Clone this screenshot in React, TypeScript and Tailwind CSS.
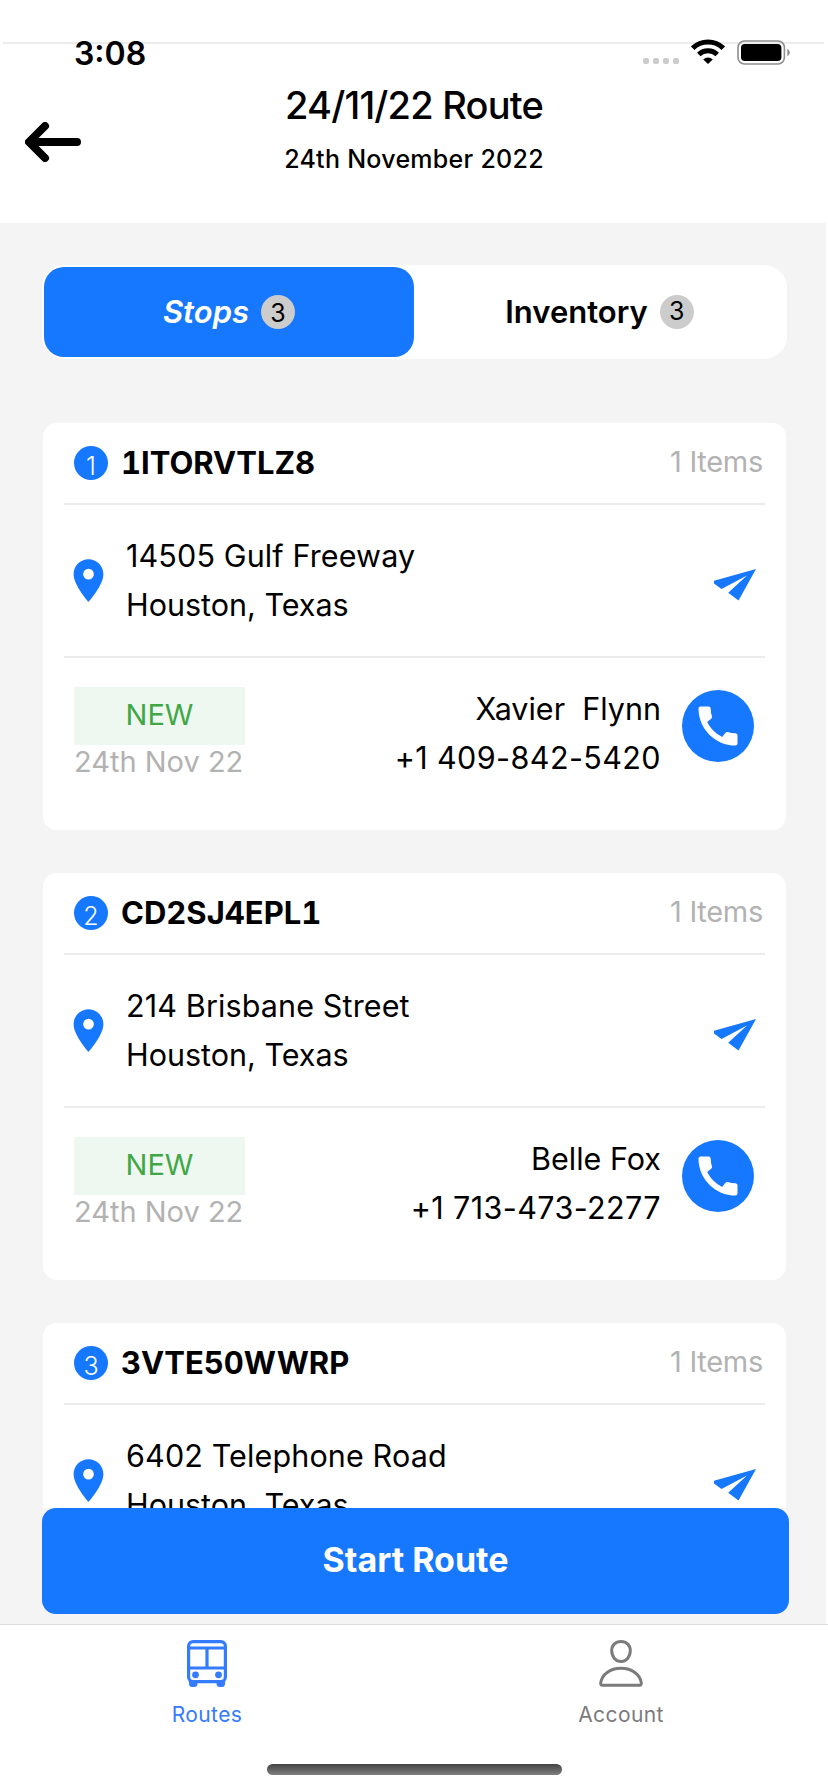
import React, { useState } from 'react';
import { MdCall, MdLocationOn } from 'react-icons/md';

const BLUE = '#1677ff';

interface Stop {
    id: string;
    items: number;
    street: string;
    city: string;
    delivery?: {
        status: string;
        date: string;
        contact: string;
        phone: string;
    };
}

const stops: Stop[] = [
    {
        id: '1ITORVTLZ8', items: 1, street: '14505 Gulf Freeway', city: 'Houston, Texas',
        delivery: { status: 'NEW', date: '24th Nov 22', contact: 'Xavier  Flynn', phone: '+1 409-842-5420' },
    },
    {
        id: 'CD2SJ4EPL1', items: 1, street: '214 Brisbane Street', city: 'Houston, Texas',
        delivery: { status: 'NEW', date: '24th Nov 22', contact: 'Belle Fox', phone: '+1 713-473-2277' },
    },
    { id: '3VTE50WWRP', items: 1, street: '6402 Telephone Road', city: 'Houston, Texas' },
];

// --- Icons ---
const BackArrow = () => (
    <svg width="56" height="40" viewBox="0 0 56 40" fill="none" stroke="black" strokeWidth="8" strokeLinecap="round" strokeLinejoin="round">
        <path d="M52 20H5M20 4L4 20L20 36" />
        <path d="M12 16L8 20L12 24Z" fill="black" strokeWidth="2" />
    </svg>
);

const WifiIcon = () => (
    <svg width="34" height="25" viewBox="0 0 34 25" fill="none" stroke="black" strokeWidth="5">
        <path d="M1.7 9.2A22 22 0 0 1 32.3 9.2" />
        <path d="M7.8 15.5A13.2 13.2 0 0 1 26.2 15.5" />
        <path d="M17 25L12.2 20.4A7 7 0 0 1 21.8 20.4Z" fill="black" stroke="none" />
    </svg>
);

const BatteryIcon = () => (
    <svg width="54" height="25" viewBox="0 0 54 25">
        <rect x="1" y="1" width="46.4" height="23" rx="6.5" fill="none" stroke="#8e8e8e" strokeWidth="1.6" />
        <rect x="4" y="4" width="40.4" height="17" rx="3.8" fill="black" />
        <path d="M50.3 9C53.6 10.3 53.6 14.7 50.3 16Z" fill="#8e8e8e" />
    </svg>
);

const SendIcon = () => (
    <svg width="42" height="32" viewBox="0 0 42 32" fill={BLUE}>
        <path d="M42 0L0 11.7V14.6L7.5 20L33 6.5L14.2 23.8L24.5 31.5Z" />
    </svg>
);

const BusIcon = () => (
    <svg width="40" height="47" viewBox="0 0 40 47" fill="none" stroke="#347bff" strokeWidth="3.2">
        <rect x="1.6" y="1.6" width="36.8" height="40" rx="4.5" />
        <path d="M1.6 8H38.4M1.6 28H38.4M20 8V28" />
        <circle cx="8.5" cy="34.8" r="3.4" fill="#347bff" stroke="none" />
        <circle cx="31.5" cy="34.8" r="3.4" fill="#347bff" stroke="none" />
        <path d="M2 40H10.5V43.5Q10.5 47 7 47H5Q2 47 2 43.5ZM29.5 40H38V43.5Q38 47 35 47H33Q29.5 47 29.5 43.5Z" fill="#347bff" stroke="none" />
    </svg>
);

const PersonIcon = () => (
    <svg width="44" height="47" viewBox="0 0 44 47" fill="none" stroke="#7b7b7b" strokeWidth="3" strokeLinejoin="round">
        <path d="M22 1.5C27.7 1.5 31.3 5.4 31.3 10.6C31.3 17 27.2 21.5 22 21.5S12.7 17 12.7 10.6C12.7 5.4 16.3 1.5 22 1.5Z" />
        <path d="M3.3 45.2Q1.5 45.2 1.7 43C2.8 34.5 11 28.3 22 28.3S41.2 34.5 42.3 43Q42.5 45.2 40.7 45.2Z" />
    </svg>
);

const StopCard: React.FC<{ stop: Stop; index: number }> = ({ stop, index }) => (
    <div className="h-[407px] shrink-0 rounded-[14px] bg-white px-[21px]">
        <div className="flex h-[82px] items-center justify-between border-b-2 border-[#ececec] pl-[10px] pr-[2px]">
            <div className="flex items-center">
                <span className="flex size-[34px] items-center justify-center rounded-full bg-[#1677ff] pt-[7px] text-[25px] font-light text-white">{index + 1}</span>
                <span className="ml-[13px] text-[31px] font-bold tabular-nums">{stop.id}</span>
            </div>
            <span className="pb-[3px] text-[29px] tracking-[-0.3px] text-[#b2b2b2]">{stop.items} Items</span>
        </div>
        <div className="flex h-[153px] items-center border-b-2 border-[#ececec] pl-[10px] pr-[9px]">
            <div className="-mx-[11px]">
                <MdLocationOn size={51} color={BLUE} />
            </div>
            <div className="ml-[23px] flex-1 pb-px text-[30.5px] leading-[49px]">
                <div className="tracking-[0.13px]">{stop.street}</div>
                <div>{stop.city}</div>
            </div>
            <div className="pt-2">
                <SendIcon />
            </div>
        </div>
        {stop.delivery && (
            <div className="flex items-start pl-[10px] pr-[11px] pt-[29px]">
                <div className="w-[171px] text-[29px]">
                    <div className="flex h-[58px] items-center justify-center bg-[#eff7f1] pb-[2px] text-[#3fa845]">{stop.delivery.status}</div>
                    <div className="whitespace-nowrap leading-[34px] text-[#b2b2b2]">{stop.delivery.date}</div>
                </div>
                <div className="-mt-[3px] flex-1 whitespace-pre pr-[21px] text-right text-[30.5px] leading-[49px]">
                    <div>{stop.delivery.contact}</div>
                    <div className="tracking-[0.4px]">{stop.delivery.phone}</div>
                </div>
                <div className="mt-[3px] flex size-[72px] items-center justify-center rounded-full bg-[#1677ff]">
                    <MdCall size={52} color="white" />
                </div>
            </div>
        )}
    </div>
);

const App: React.FC = () => {
    const [tab, setTab] = useState<'STOPS' | 'INVENTORY'>('STOPS');

    return (
        <div className="flex h-[1792px] w-[828px] flex-col overflow-hidden bg-white font-[Inter,sans-serif] text-black">
            <header className="h-[223px] shrink-0 pt-[42px]">
                <div className="ml-[3px] mr-1 flex h-[24px] items-start justify-between border-t-2 border-[#ececec] pl-[71px] pr-[33px]">
                    <span className="-mt-[11px] text-[32px] font-semibold leading-[42px]">3:08</span>
                    <div className="-mt-[5px] flex items-start">
                        <div className="mt-[19px] flex gap-1">
                            {[0, 1, 2, 3].map((dot) => (
                                <span key={dot} className="size-[6px] rounded-[2px] bg-[#cccccc]" />
                            ))}
                        </div>
                        <div className="ml-3 mr-3"><WifiIcon /></div>
                        <div className="pt-px"><BatteryIcon /></div>
                    </div>
                </div>
                <div className="flex">
                    <button className="ml-[25px] mt-[56px] h-10 w-14">
                        <BackArrow />
                    </button>
                    <div className="mr-[81px] flex-1 pt-[14px] text-center">
                        <h1 className="text-[38px] font-medium leading-[50px] tracking-[-0.8px]">24/11/22 Route</h1>
                        <p className="mt-[13px] text-[25px] font-medium leading-[32px] tracking-[0.27px]">24th November 2022</p>
                    </div>
                </div>
            </header>

            <main className="mr-[2px] flex min-h-0 flex-1 flex-col bg-[#f4f4f4] pb-[10px] pl-[42px]">
                <div className="mt-[42px] flex h-[94px] w-[745px] shrink-0 rounded-[23px] bg-white p-[2px] text-[31px] font-semibold">
                    <button onClick={() => setTab('STOPS')} className={`flex w-[370px] items-center justify-center gap-3 rounded-[20px] ${tab === 'STOPS' ? 'bg-[#1677ff] italic text-white' : ''}`}>
                        Stops
                        <span className="flex size-[34px] items-center justify-center rounded-full bg-[#cccccc] pt-[3px] text-[25px] font-normal not-italic text-black">3</span>
                    </button>
                    <button onClick={() => setTab('INVENTORY')} className={`flex flex-1 items-center justify-center gap-3 rounded-[20px] ${tab === 'INVENTORY' ? 'bg-[#1677ff] italic text-white' : ''}`}>
                        Inventory
                        <span className="flex size-[34px] items-center justify-center rounded-full bg-[#cccccc] pb-px text-[25px] font-normal not-italic text-black">3</span>
                    </button>
                </div>

                <div className="ml-px mt-[64px] flex min-h-0 w-[743px] flex-1 flex-col gap-[43px] overflow-hidden">
                    {stops.map((stop, index) => (
                        <StopCard key={stop.id} stop={stop} index={index} />
                    ))}
                </div>
                <button className="h-[106px] w-[747px] shrink-0 rounded-[14px] bg-[#1677ff] pb-[4px] text-[34px] font-bold text-white">Start Route</button>
            </main>

            <nav className="h-[168px] shrink-0 border-t border-[#dddddd] bg-white">
                <div className="flex h-[139px] pt-[15px] text-[21px] tracking-[0.4px]">
                    <div className="flex flex-1 flex-col items-center gap-[12px] text-[#347bff]">
                        <BusIcon />
                        Routes
                    </div>
                    <div className="flex flex-1 flex-col items-center gap-[12px] text-[#7b7b7b]">
                        <PersonIcon />
                        Account
                    </div>
                </div>
                <div className="mx-auto h-[11px] w-[295px] rounded-full bg-linear-to-b from-[#444444] to-[#808080]" />
            </nav>
        </div>
    );
};

export default App;
